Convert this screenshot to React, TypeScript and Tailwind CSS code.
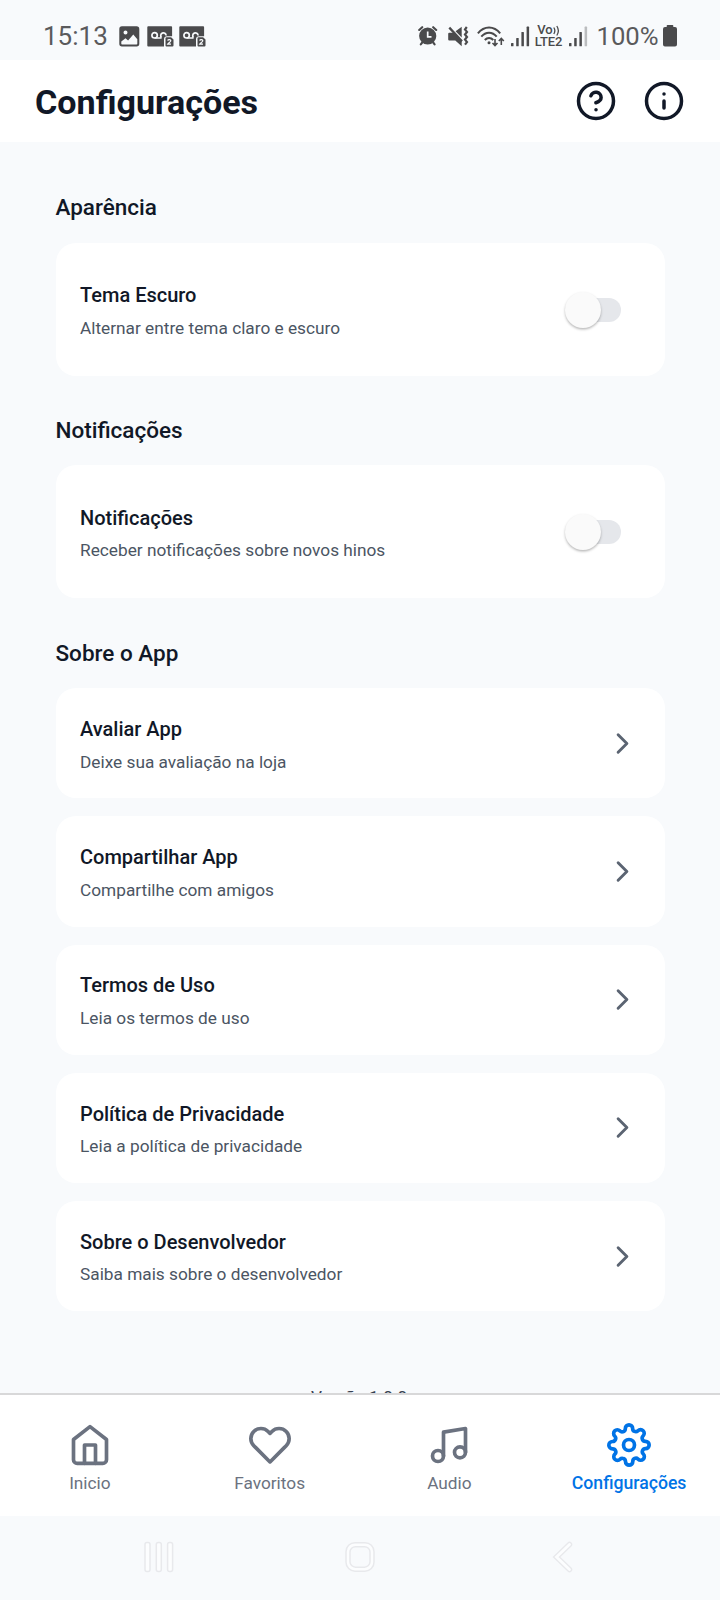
import type { ReactNode } from "react";
import { FiChevronRight, FiHeart, FiHelpCircle, FiHome, FiInfo, FiMusic, FiSettings } from "react-icons/fi";

const links = [
  { title: "Avaliar App", text: "Deixe sua avaliação na loja" },
  { title: "Compartilhar App", text: "Compartilhe com amigos" },
  { title: "Termos de Uso", text: "Leia os termos de uso" },
  { title: "Política de Privacidade", text: "Leia a política de privacidade" },
  { title: "Sobre o Desenvolvedor", text: "Saiba mais sobre o desenvolvedor" },
];

function ImageIcon() {
  return (
    <svg className="h-[21px] w-[21px]" viewBox="0 0 21 21">
      <path
        fill="currentColor"
        fillRule="evenodd"
        d="M3 0.3h14.6a2.7 2.7 0 0 1 2.7 2.7v14.8a2.7 2.7 0 0 1-2.7 2.7H3a2.7 2.7 0 0 1-2.7-2.7V3A2.7 2.7 0 0 1 3 .3ZM6.5 4.6a2 2 0 1 0 0 4 2 2 0 0 0 0-4ZM2.3 15.6v1.9c0 .7.4 1.1 1.1 1.1h13.8c.7 0 1.1-.4 1.1-1.1v-4.3l-4-4.6-5.2 6-2.6-2.4Z"
      />
    </svg>
  );
}

function VoicemailIcon() {
  return (
    <svg className="h-[21px] w-[27px]" viewBox="0 0 27 21">
      <path fill="currentColor" d="M1.2.3h23a.9.9 0 0 1 .9.9v9H20a3 3 0 0 0-3 3v7.2H1.2a.9.9 0 0 1-.9-.9V1.2a.9.9 0 0 1 .9-.9Z" />
      <g fill="none" stroke="#f8fafc" strokeWidth="1.7">
        <circle cx="7.6" cy="9.3" r="2.7" />
        <path d="M7.6 12h7M14.5 11.5a2.7 2.7 0 1 1 4.6-2" />
      </g>
      <path fill="currentColor" d="M19.5 11.2h4.6l2.4 2.2v6.2a1 1 0 0 1-1 1h-6a1 1 0 0 1-1-1v-7.4a1 1 0 0 1 1-1Z" />
      <path fill="none" stroke="#f8fafc" strokeWidth="1.3" d="M20.7 14.6c.4-1.4 3.3-1.2 3 .4-.2 1-2 1.8-2.9 3.2h3.2" />
    </svg>
  );
}

function AlarmIcon() {
  return (
    <svg className="h-[21px] w-5" viewBox="0 0 20 21">
      <circle cx="9.7" cy="11" r="8.6" fill="currentColor" />
      <g fill="none" stroke="currentColor" strokeWidth="2.1" strokeLinecap="round">
        <path d="M1.2 5 4.2 2.2M18.2 5 15.2 2.2M4.2 17.5 2.8 19.3M15.2 17.5l1.4 1.8" />
      </g>
      <path d="M9.7 6.5v5.4h3.8" fill="none" stroke="#f8fafc" strokeWidth="1.7" />
    </svg>
  );
}

function MuteVibrateIcon() {
  return (
    <svg className="h-[21px] w-[21px]" viewBox="0 0 21 21">
      <path fill="currentColor" d="M1.2 6.8h5l7.5 8.3v5.2L7.3 14.4H1.2a1 1 0 0 1-1-1V7.8a1 1 0 0 1 1-1ZM7.6 5.2 13.7.8v10.8Z" />
      <path fill="none" stroke="currentColor" strokeWidth="2.3" d="M1.3 1.6 14 15.2" />
      <path fill="none" stroke="currentColor" strokeWidth="2.2" d="M18.8 1 17 3.4l2 2.5-2 2.6 2 2.5-2 2.6 2 2.5-2 2.6" />
    </svg>
  );
}

function WifiIcon() {
  return (
    <svg className="h-[22px] w-7" viewBox="0 0 28 22">
      <g fill="none" stroke="currentColor" strokeWidth="2">
        <path d="M.9 7.3C7.2-.6 16.9-.6 23.2 7.3M4.3 10.7c4.500-5.300 11-5.300 15.400 0M7.800 14c2.500-2.800 6-2.800 8.500 0" />
        <path strokeWidth="1.6" d="M18 13v6.300M15.500 17l2.500 2.500 2.500-2.500M24.300 19v-6.300M21.800 15l2.500-2.500 2.500 2.500" />
      </g>
      <circle cx="12" cy="16.7" r="1.5" fill="currentColor" />
    </svg>
  );
}

function SignalIcon({ weak }: { weak?: boolean }) {
  return (
    <svg className="h-[21px] w-[19px]" viewBox="0 0 19 21">
      <g fill="currentColor">
        <rect x="0" y="17" width="2.5" height="3.3" rx=".6" />
        <rect x="5.2" y="12" width="2.5" height="8.3" rx=".6" />
        <rect x="10.4" y="6" width="2.5" height="14.3" rx=".6" />
        <rect x="15.6" y=".6" width="2.5" height="19.7" rx=".6" opacity={weak ? 0.35 : 1} />
      </g>
    </svg>
  );
}

function StatusBar() {
  return (
    <div className="flex h-[60px] shrink-0 items-start pt-[22px] text-[#4a4a4c]">
      <span className="ml-[43px] w-[64px] text-[26px] leading-7 text-[#5a5a5c]">15:13</span>
      <div className="mt-1 ml-3 flex">
        <ImageIcon />
      </div>
      <div className="mt-1 ml-[7px] flex gap-[5px]">
        <VoicemailIcon />
        <VoicemailIcon />
      </div>
      <div className="mt-[3px] ml-auto flex">
        <AlarmIcon />
      </div>
      <div className="mt-1 ml-[10px] flex">
        <MuteVibrateIcon />
      </div>
      <div className="mt-1 ml-2 flex">
        <WifiIcon />
      </div>
      <div className="mt-1 ml-[6px] flex">
        <SignalIcon />
      </div>
      <div className="mt-[2px] ml-[5px] flex w-[28px] flex-col items-center text-[13px] leading-[12px] font-medium">
        <span className="flex h-3 items-start">
          Vo
          <svg className="mt-[1px] h-[11px] w-[7px]" viewBox="0 0 7 11" fill="none" stroke="currentColor" strokeWidth="1.3">
            <path d="M.8 2.5c1.3 2 1.3 4.5 0 6.500M3.800 1c2 3 2 6.500 0 9.500" />
          </svg>
        </span>
        <span className="h-3 tracking-[-0.2px]">LTE2</span>
      </div>
      <div className="mt-1 ml-[6px] flex">
        <SignalIcon weak />
      </div>
      <span className="ml-[9px] w-[63px] text-[25.7px] leading-7 whitespace-nowrap text-[#5a5a5c]">100%</span>
      <svg className="mt-[3px] mr-[43.5px] ml-[3px] h-[22px] w-[14px]" viewBox="0 0 14 22">
        <path fill="currentColor" d="M4.5 0h5a.8.8 0 0 1 .8.8V2h1.7a2 2 0 0 1 2 2v15.5a2 2 0 0 1-2 2H2a2 2 0 0 1-2-2V4a2 2 0 0 1 2-2h1.7V.8a.8.8 0 0 1 .8-.8Z" />
      </svg>
    </div>
  );
}

function Section({ title, children }: { title: string; children: ReactNode }) {
  return (
    <section>
      <h2 className="mb-[21.4px] text-[22.5px] leading-7 font-medium text-[#111827]">{title}</h2>
      {children}
    </section>
  );
}

function CardText({ title, text }: { title: string; text: string }) {
  return (
    <div className="pt-[3px]">
      <h3 className="text-[20px] leading-[26px] font-medium text-[#111827]">{title}</h3>
      <p className="mt-[7.7px] text-[17.25px] leading-6 text-[#4b5563]">{text}</p>
    </div>
  );
}

function SwitchCard({ title, text }: { title: string; text: string }) {
  return (
    <div className="flex h-[133px] items-center justify-between rounded-[20px] bg-white pr-11 pl-[24.5px]">
      <CardText title={title} text={text} />
      <button aria-label={title} className="mt-px flex h-9 w-14 flex-row-reverse items-center">
        <span className="h-6 w-12 shrink-0 rounded-full bg-[#e5e7eb]" />
        <span className="relative -mr-7 h-9 w-9 shrink-0 rounded-full bg-[#fafafa] shadow-[0_1.5px_2.5px_rgba(0,0,0,0.28)]" />
      </button>
    </div>
  );
}

function Tab({ icon, label, active }: { icon: ReactNode; label: string; active?: boolean }) {
  return (
    <div className={`flex flex-1 flex-col items-center pt-7 ${active ? "text-[#0073e6]" : "text-[#6b7280]"}`}>
      {icon}
      <span className={active ? "mt-1 text-[17.65px] leading-6 font-medium" : "mt-1 text-[17.25px] leading-6"}>{label}</span>
    </div>
  );
}

export default function App() {
  return (
    <div className="flex h-[1600px] w-[720px] flex-col overflow-hidden bg-[#f8fafc] font-['Roboto',sans-serif]">
      <StatusBar />
      <header className="flex h-[82px] shrink-0 items-center justify-between bg-white pr-[35px] pl-[34px] text-[#111827]">
        <h1 className="pt-[2px] pl-px text-[34.1px] leading-10 font-bold">Configurações</h1>
        <div className="flex gap-[26px]">
          <FiHelpCircle className="h-[42px] w-[42px]" />
          <FiInfo className="h-[42px] w-[42px]" />
        </div>
      </header>

      <main className="min-h-0 flex-1 overflow-hidden px-[55.5px] pt-[51.3px]">
        <div className="flex flex-col gap-[40.4px]">
          <Section title="Aparência">
            <SwitchCard title="Tema Escuro" text="Alternar entre tema claro e escuro" />
          </Section>
          <Section title="Notificações">
            <SwitchCard title="Notificações" text="Receber notificações sobre novos hinos" />
          </Section>
          <Section title="Sobre o App">
            <div className="flex flex-col gap-[18px]">
              {links.map((link) => (
                <div key={link.title} className="flex h-[110.2px] items-center justify-between rounded-[20px] bg-white px-[24.5px]">
                  <CardText title={link.title} text={link.text} />
                  <FiChevronRight className="h-[35px] w-[35px] text-[#5b6472]" />
                </div>
              ))}
            </div>
          </Section>
        </div>
        <p className="mt-[74px] pr-[2px] text-center text-[17.25px] leading-6 text-[#374151]">Versão 1.0.0</p>
      </main>

      <nav className="flex h-[123px] shrink-0 border-t-2 border-[#d8d8d9] bg-white pr-px">
        <Tab icon={<FiHome className="h-11 w-11" />} label="Inicio" />
        <Tab icon={<FiHeart className="h-11 w-11" />} label="Favoritos" />
        <Tab icon={<FiMusic className="h-11 w-11" />} label="Audio" />
        <Tab icon={<FiSettings className="h-11 w-11" />} label="Configurações" active />
      </nav>

      <div className="flex h-[84px] shrink-0 items-start pt-[25px]">
        <svg className="ml-36 h-8 w-[30px]" viewBox="0 0 30 32" fill="#fcfdfe" stroke="#e8e9ec" strokeWidth="1.5">
          <rect x="1" y="1.5" width="5" height="29" rx="2" />
          <rect x="12.3" y="1.5" width="5" height="29" rx="2" />
          <rect x="23.6" y="1.5" width="5" height="29" rx="2" />
        </svg>
        <svg className="ml-[171px] h-8 w-[30px]" viewBox="0 0 30 32" fill="none" stroke="#e8e9ec" strokeWidth="1.5">
          <rect x="1" y="1.7" width="28" height="28.5" rx="9" fill="#fcfdfe" />
          <rect x="5" y="5.7" width="20" height="20.5" rx="5.5" fill="#f8fafc" />
        </svg>
        <svg className="ml-[177px] h-8 w-[22px]" viewBox="0 0 22 32" fill="none" strokeLinecap="round">
          <path d="M17.5 3.5 4.5 16l13 12.5" stroke="#e8e9ec" strokeWidth="5.5" />
          <path d="M17.5 3.5 4.5 16l13 12.5" stroke="#fcfdfe" strokeWidth="2.8" />
        </svg>
      </div>
    </div>
  );
}
